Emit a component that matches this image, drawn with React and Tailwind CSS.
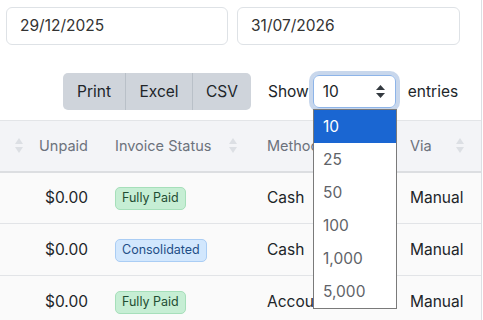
import React from "react";

function SortIcon({ className = "" }) {
  return (
    <svg width="8" height="15" viewBox="0 0 8 15" className={className}>
      <path d="M4 0 L8 6 L0 6 Z" fill="#dcdfe4" />
      <path d="M0 9 L8 9 L4 15 Z" fill="#dcdfe4" />
    </svg>
  );
}

function Badge({ kind, children }) {
  const cls =
    kind === "green"
      ? "bg-[#c6eed4] border-[#a6dfba] text-[#1f4d33]"
      : "bg-[#d2e7fd] border-[#aacdf4] text-[#1f4e86]";
  return (
    <span
      className={`inline-flex items-center h-[23px] px-[6px] rounded-[5px] border text-[12.5px] ${cls}`}
    >
      {children}
    </span>
  );
}

const rows = [
  { unpaid: "$0.00", status: ["green", "Fully Paid"], method: "Cash", via: "Manual" },
  { unpaid: "$0.00", status: ["blue", "Consolidated"], method: "Cash", via: "Manual" },
  { unpaid: "$0.00", status: ["green", "Fully Paid"], method: "Account", via: "Manual" },
];

export default function App() {
  return (
    <div
      className="relative w-[482px] h-[320px] overflow-hidden bg-white border-r border-[#dcdfe3] text-[#212529]"
      style={{ fontFamily: "Inter, 'Noto Sans', sans-serif" }}
    >
      {/* date inputs */}
      <div className="flex gap-[9px] pl-[6px] pt-[7px]">
        <div className="w-[222px] h-[38px] border border-[#dee2e6] rounded-[6px] flex items-center pl-[13px] text-[15.5px] text-[#333]">
          29/12/2025
        </div>
        <div className="w-[223px] h-[38px] border border-[#dee2e6] rounded-[6px] flex items-center pl-[13px] text-[15.5px] text-[#333]">
          31/07/2026
        </div>
      </div>

      {/* toolbar */}
      <div className="flex items-center mt-[28px] pl-[63px] h-[37px]">
        <div className="flex h-[37px] rounded-[5px] overflow-hidden bg-[#cfd4db] text-[15.5px] text-[#212529]">
          <div className="w-[63px] flex items-center justify-center border-r border-[#b9c0c8]">Print</div>
          <div className="w-[67px] flex items-center justify-center border-r border-[#b9c0c8]">Excel</div>
          <div className="w-[58px] flex items-center justify-center">CSV</div>
        </div>
        <span className="ml-[17px] text-[15.5px] text-[#212529]">Show</span>
        <div className="ml-[4px] w-[83px] h-[33px] rounded-[6px] border border-[#8db4e8] shadow-[0_0_0_4px_#c8d7ec] flex items-center justify-between pl-[9px] pr-[10px] text-[15.5px] text-[#212529]">
          <span>10</span>
          <svg width="9" height="13" viewBox="0 0 9 13">
            <path d="M4.5 0 L9 5 L0 5 Z" fill="#343a40" />
            <path d="M0 8 L9 8 L4.5 13 Z" fill="#343a40" />
          </svg>
        </div>
        <span className="ml-[12px] text-[15.5px] text-[#212529]">entries</span>
      </div>

      {/* table */}
      <table className="mt-[10px] w-[482px] table-fixed border-collapse text-[15.5px]">
        <colgroup>
          <col className="w-[103px]" />
          <col className="w-[152px]" />
          <col className="w-[143px]" />
          <col className="w-[84px]" />
        </colgroup>
        <thead>
          <tr className="h-[51px] bg-[#f3f4f7] border-t border-[#e3e5e8] border-b-2 border-b-[#dcdee1] text-[#6c727c] text-[14.5px] font-normal">
            <th className="font-normal p-0">
              <div className="flex items-center justify-between pl-[15px] pr-[15px]">
                <SortIcon />
                <span>Unpaid</span>
              </div>
            </th>
            <th className="font-normal p-0">
              <div className="flex items-center justify-between pl-[12px] pr-[18px]">
                <span>Invoice Status</span>
                <SortIcon />
              </div>
            </th>
            <th className="font-normal p-0">
              <div className="flex items-center justify-between pl-[12px] pr-[18px]">
                <span>Method</span>
                <SortIcon />
              </div>
            </th>
            <th className="font-normal p-0">
              <div className="flex items-center justify-between pl-[12px] pr-[18px]">
                <span>Via</span>
                <SortIcon />
              </div>
            </th>
          </tr>
        </thead>
        <tbody>
          {rows.map((r, i) => (
            <tr key={i} className="h-[52px] bg-[#fafafa] border-b border-[#e2e4e7]">
              <td className="p-0 pr-[15px] text-right">{r.unpaid}</td>
              <td className="p-0 pl-[12px]">
                <Badge kind={r.status[0]}>{r.status[1]}</Badge>
              </td>
              <td className="p-0 pl-[12px] whitespace-nowrap overflow-hidden">{r.method}</td>
              <td className="p-0 pl-[12px]">{r.via}</td>
            </tr>
          ))}
        </tbody>
      </table>

      {/* dropdown overlay */}
      <div className="absolute left-[313px] top-[109px] w-[84px] bg-white border border-[#7a7a7a] text-[15.5px]">
        {["10", "25", "50", "100", "1,000", "5,000"].map((o, i) => (
          <div
            key={o}
            className={`h-[33px] flex items-center pl-[9px] ${
              i === 0 ? "bg-[#1a66d2] text-white" : "text-[#5f6368]"
            }`}
          >
            {o}
          </div>
        ))}
      </div>
    </div>
  );
}
